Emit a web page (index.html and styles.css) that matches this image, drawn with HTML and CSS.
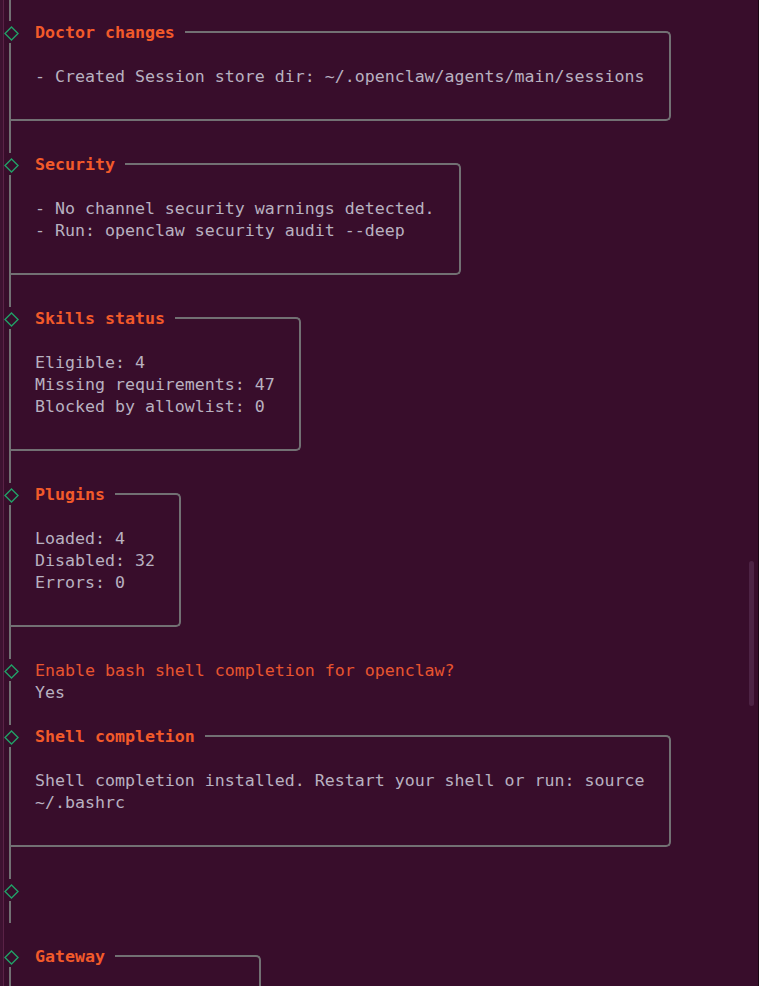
FILE: index.html
```html
<!DOCTYPE html>
<html lang="en">
<head>
<meta charset="utf-8">
<title>openclaw doctor</title>
<link rel="stylesheet" href="styles.css">
</head>
<body>
<main class="term">
  <div class="rail rail-top"></div>

  <section class="panel">
    <div class="head w66">
      <span class="node"><svg width="15" height="15" viewBox="0 0 15 15"><polygon points="7.5,1 14,7.5 7.5,14 1,7.5"/></svg></span>
      <span class="title">Doctor changes</span>
      <span class="rule"></span>
    </div>
    <div class="body w66">
      <div class="line"></div>
      <div class="line">- Created Session store dir: ~/.openclaw/agents/main/sessions</div>
      <div class="line"></div>
    </div>
  </section>
  <div class="rail link"></div>

  <section class="panel">
    <div class="head w45">
      <span class="node"><svg width="15" height="15" viewBox="0 0 15 15"><polygon points="7.5,1 14,7.5 7.5,14 1,7.5"/></svg></span>
      <span class="title">Security</span>
      <span class="rule"></span>
    </div>
    <div class="body w45">
      <div class="line"></div>
      <div class="line">- No channel security warnings detected.</div>
      <div class="line">- Run: openclaw security audit --deep</div>
      <div class="line"></div>
    </div>
  </section>
  <div class="rail link"></div>

  <section class="panel">
    <div class="head w29">
      <span class="node"><svg width="15" height="15" viewBox="0 0 15 15"><polygon points="7.5,1 14,7.5 7.5,14 1,7.5"/></svg></span>
      <span class="title">Skills status</span>
      <span class="rule"></span>
    </div>
    <div class="body w29">
      <div class="line"></div>
      <div class="line">Eligible: 4</div>
      <div class="line">Missing requirements: 47</div>
      <div class="line">Blocked by allowlist: 0</div>
      <div class="line"></div>
    </div>
  </section>
  <div class="rail link"></div>

  <section class="panel">
    <div class="head w17">
      <span class="node"><svg width="15" height="15" viewBox="0 0 15 15"><polygon points="7.5,1 14,7.5 7.5,14 1,7.5"/></svg></span>
      <span class="title">Plugins</span>
      <span class="rule"></span>
    </div>
    <div class="body w17">
      <div class="line"></div>
      <div class="line">Loaded: 4</div>
      <div class="line">Disabled: 32</div>
      <div class="line">Errors: 0</div>
      <div class="line"></div>
    </div>
  </section>
  <div class="rail link"></div>

  <section class="prompt">
    <div class="head">
      <span class="node"><svg width="15" height="15" viewBox="0 0 15 15"><polygon points="7.5,1 14,7.5 7.5,14 1,7.5"/></svg></span>
      <span class="question">Enable bash shell completion for openclaw?</span>
    </div>
    <div class="rail answer"><div class="line">Yes</div></div>
    <div class="rail step"></div>
  </section>

  <section class="panel">
    <div class="head w66">
      <span class="node"><svg width="15" height="15" viewBox="0 0 15 15"><polygon points="7.5,1 14,7.5 7.5,14 1,7.5"/></svg></span>
      <span class="title">Shell completion</span>
      <span class="rule"></span>
    </div>
    <div class="body w66">
      <div class="line"></div>
      <div class="line">Shell completion installed. Restart your shell or run: source</div>
      <div class="line">~/.bashrc</div>
      <div class="line"></div>
    </div>
  </section>
  <div class="rail link"></div>

  <div class="head">
    <span class="node"><svg width="15" height="15" viewBox="0 0 15 15"><polygon points="7.5,1 14,7.5 7.5,14 1,7.5"/></svg></span>
  </div>
  <div class="rail step"></div>
  <div class="blank"></div>

  <section class="panel">
    <div class="head w25">
      <span class="node"><svg width="15" height="15" viewBox="0 0 15 15"><polygon points="7.5,1 14,7.5 7.5,14 1,7.5"/></svg></span>
      <span class="title">Gateway</span>
      <span class="rule"></span>
    </div>
    <div class="body w25 open">
      <div class="line"></div>
      <div class="line"></div>
    </div>
  </section>
</main>
<div class="scrollbar"></div>
</body>
</html>
```

FILE: styles.css
```css
html {
  background: #380d2b;
}

body {
  margin: 0;
  height: 986px;
  overflow: hidden;
  background: linear-gradient(to right, #3e1231 0 3px, #5a2246 3px 4px, #380d2b 4px calc(100% - 1px), #1a0612 calc(100% - 1px));
  font-family: "DejaVu Sans Mono", "Liberation Mono", monospace;
  font-size: 16.6px;
  line-height: 22px;
  color: #b8b1c0;
}

.term {
  display: flex;
  flex-direction: column;
}

.rail {
  margin-left: 9px;
  border-left: 2px solid #727073;
}

.rail-top {
  height: 21px;
}

.link {
  height: 32px;
}

.step {
  height: 22px;
}

.blank {
  height: 22px;
}

.head {
  display: flex;
  height: 22px;
  align-items: center;
}

.node {
  width: 35px;
  flex: none;
  display: flex;
  align-items: center;
  padding-top: 2px;
  box-sizing: border-box;
  height: 22px;
}

.node svg {
  margin-left: 4px;
  fill: none;
  stroke: #22a067;
  stroke-width: 1.4;
}

.title,
.question {
  white-space: pre;
  padding-top: 2px;
}

.title {
  font-weight: bold;
  color: #f25a2a;
}

.question {
  color: #e8552f;
}

.rule {
  flex: 1;
  align-self: stretch;
  margin-left: 10px;
  margin-top: 10px;
  border-top: 2px solid #727073;
  border-right: 2px solid #727073;
  border-top-right-radius: 5px;
}

.body {
  box-sizing: border-box;
  margin-left: 9px;
  padding-left: 24px;
  padding-bottom: 10px;
  border-left: 2px solid #727073;
  border-right: 2px solid #727073;
  border-bottom: 2px solid #727073;
  border-bottom-right-radius: 5px;
}

.body.open {
  border-bottom: none;
  padding-bottom: 0;
}

.line {
  box-sizing: border-box;
  height: 22px;
  padding-top: 1px;
  white-space: pre;
}

.answer {
  padding-left: 24px;
}

/* widths: box right edge at column centre */
.head.w66 { width: 671px; }
.body.w66 { width: 662px; }
.head.w45 { width: 461px; }
.body.w45 { width: 452px; }
.head.w29 { width: 301px; }
.body.w29 { width: 292px; }
.head.w17 { width: 181px; }
.body.w17 { width: 172px; }
.head.w25 { width: 261px; }
.body.w25 { width: 252px; }

.scrollbar {
  position: fixed;
  top: 561px;
  right: 5px;
  width: 5px;
  height: 145px;
  border-radius: 3px;
  background: #4d2344;
}
```
